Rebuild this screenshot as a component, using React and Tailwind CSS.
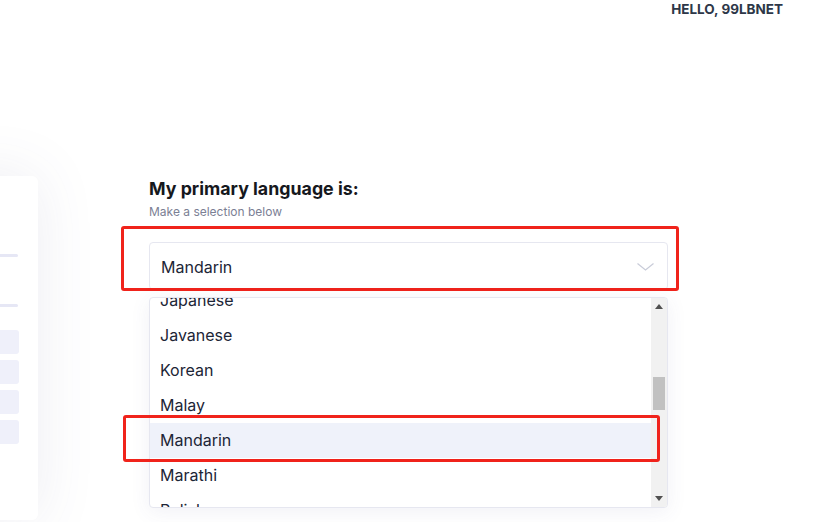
export default function App() {
  const items = ["Japanese", "Javanese", "Korean", "Malay", "Mandarin", "Marathi", "Polish"];
  return (
    <div
      className="relative w-[818px] h-[522px] overflow-hidden bg-white"
      style={{ fontFamily: 'Inter, "Noto Sans", sans-serif' }}
    >
      <header className="flex justify-end pr-[35px] h-[16px] pt-[1px] text-[13.5px] leading-[16px] font-bold text-[#2d3748]">
        HELLO, 99LBNET
      </header>
      <div className="flex items-start mt-[160px]">
        <div className="w-[200px] -ml-[162px] h-[344px] shrink-0 rounded-[6px] bg-white shadow-[0_0_60px_rgba(80,80,130,0.10)] flex flex-col items-end pr-[20px] pt-[78px]">
          <div className="w-[60px] h-[3px] rounded-full bg-[#e6e7f5]" />
          <div className="w-[60px] h-[3px] rounded-full bg-[#e6e7f5] mt-[47px]" />
          <div className="flex flex-col gap-[6px] mt-[23px] mr-[-1px]">
            <div className="w-[60px] h-[24px] rounded-[3px] bg-[#eff0fa]" />
            <div className="w-[60px] h-[24px] rounded-[3px] bg-[#eff0fa]" />
            <div className="w-[60px] h-[24px] rounded-[3px] bg-[#eff0fa]" />
            <div className="w-[60px] h-[24px] rounded-[3px] bg-[#eff0fa]" />
          </div>
        </div>
        <div className="ml-[111px] w-[519px] pt-[1px]">
          <h1 className="text-[17.8px] leading-[24px] font-bold text-[#16181d]">My primary language is:</h1>
          <p className="text-[12px] leading-[16px] mt-[3px] text-[#7b8094]">Make a selection below</p>
          <div className="relative mt-[22px]">
            <div className="h-[48px] rounded-[4px] border border-[#e6e7f0] bg-white flex items-center justify-between pl-[11px] pr-[13px]">
              <span className="text-[16px] pt-[2px] text-[#1c2536]">Mandarin</span>
              <svg width="17" height="8" viewBox="0 0 17 8" fill="none" className="mt-[2px]">
                <path d="M0.5 0.5 L8.5 7 L16.5 0.5" stroke="#c9ccd9" strokeWidth="1.2" />
              </svg>
            </div>
            <div className="absolute left-[-28px] right-[-11px] top-[-16px] bottom-[-1px] border-[3px] border-[#f0231b] rounded-[3px] pointer-events-none" />
          </div>
          <div className="relative mt-[7px] h-[211px] rounded-[4px] border border-[#e6e7f0] bg-white shadow-[0_4px_20px_rgba(80,80,140,0.08)] flex overflow-hidden">
            <div className="flex-1 overflow-hidden">
              <div className="-mt-[15px]">
                {items.map((it) => (
                  <div
                    key={it}
                    className={`h-[35px] flex items-center pl-[10px] pb-[1px] text-[16px] text-[#1c2536] ${it === "Mandarin" ? "bg-[#eff2fa]" : ""}`}
                  >
                    {it}
                  </div>
                ))}
              </div>
            </div>
            <div className="w-[16px] bg-[#f1f1f1] flex flex-col items-center justify-between py-[6px] relative">
              <svg width="8" height="5" viewBox="0 0 8 5"><path d="M0 5 L4 0 L8 5 Z" fill="#505050" /></svg>
              <div className="absolute left-[2px] top-[79px] w-[12px] h-[33px] bg-[#c1c1c1]" />
              <svg width="8" height="5" viewBox="0 0 8 5"><path d="M0 0 L4 5 L8 0 Z" fill="#505050" /></svg>
            </div>
          </div>
        </div>
      </div>
      <div className="absolute left-[123px] top-[415px] w-[537px] h-[47px] border-[3px] border-[#f0231b] rounded-[3px] pointer-events-none" />
    </div>
  );
}
